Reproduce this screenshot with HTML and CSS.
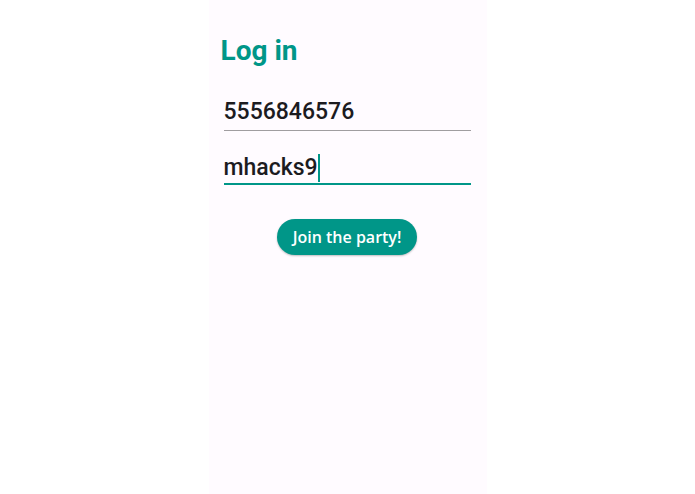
FILE: index.html
```
<!DOCTYPE html>
<html lang="en">
<head>
    <meta charset="UTF-8">
    <meta name="viewport" content="width=device-width, initial-scale=1.0">
    <title>Log in</title>
    <link rel="stylesheet" href="styles.css">
</head>
<body>
    <main class="screen">
        <h1>Log in</h1>
        <form class="login-form">
            <input type="tel" name="phone" value="5556846576" aria-label="Phone number">
            <div class="field-active">
                <input type="text" name="code" value="mhacks9" aria-label="Password">
                <span class="cursor"></span>
            </div>
            <button type="submit" class="join-button">Join the party!</button>
        </form>
    </main>
</body>
</html>
```

FILE: styles.css
```
* {
    box-sizing: border-box;
}
body {
    margin: 0;
    background-color: white;
    font-family: Roboto, sans-serif;
}
.screen {
    width: 40%;
    min-width: 276px;
    min-height: 100vh;
    margin: 0 auto;
    padding: 34px 12px;
    background-color: #fffbff;
}
h1 {
    margin: 0;
    font-size: 28px;
    line-height: 34px;
    font-weight: 700;
    color: #009688;
}
.login-form {
    display: flex;
    flex-direction: column;
    padding: 24px 4px 0 3px;
}
.login-form input {
    width: 100%;
    height: 39px;
    padding: 0;
    border: none;
    border-bottom: 1px solid #a09da0;
    border-radius: 0;
    outline: none;
    background: transparent;
    font-family: Roboto, sans-serif;
    font-size: 23px;
    font-weight: 500;
    color: #1c1b1f;
}
.field-active {
    position: relative;
    margin-top: 15px;
}
.login-form .field-active input {
    display: block;
    padding-top: 6px;
    border-bottom: 2px solid #009688;
}
.cursor {
    position: absolute;
    left: 94px;
    top: 8px;
    width: 2px;
    height: 28px;
    background-color: #009688;
}
.join-button {
    align-self: center;
    margin-top: 34px;
    padding: 0 16px;
    height: 36px;
    border: none;
    border-radius: 18px;
    background-color: #009688;
    box-shadow: 0 1px 2px rgba(0, 0, 0, 0.25);
    font-family: "Open Sans", sans-serif;
    font-size: 16px;
    font-weight: 600;
    color: white;
}
```
